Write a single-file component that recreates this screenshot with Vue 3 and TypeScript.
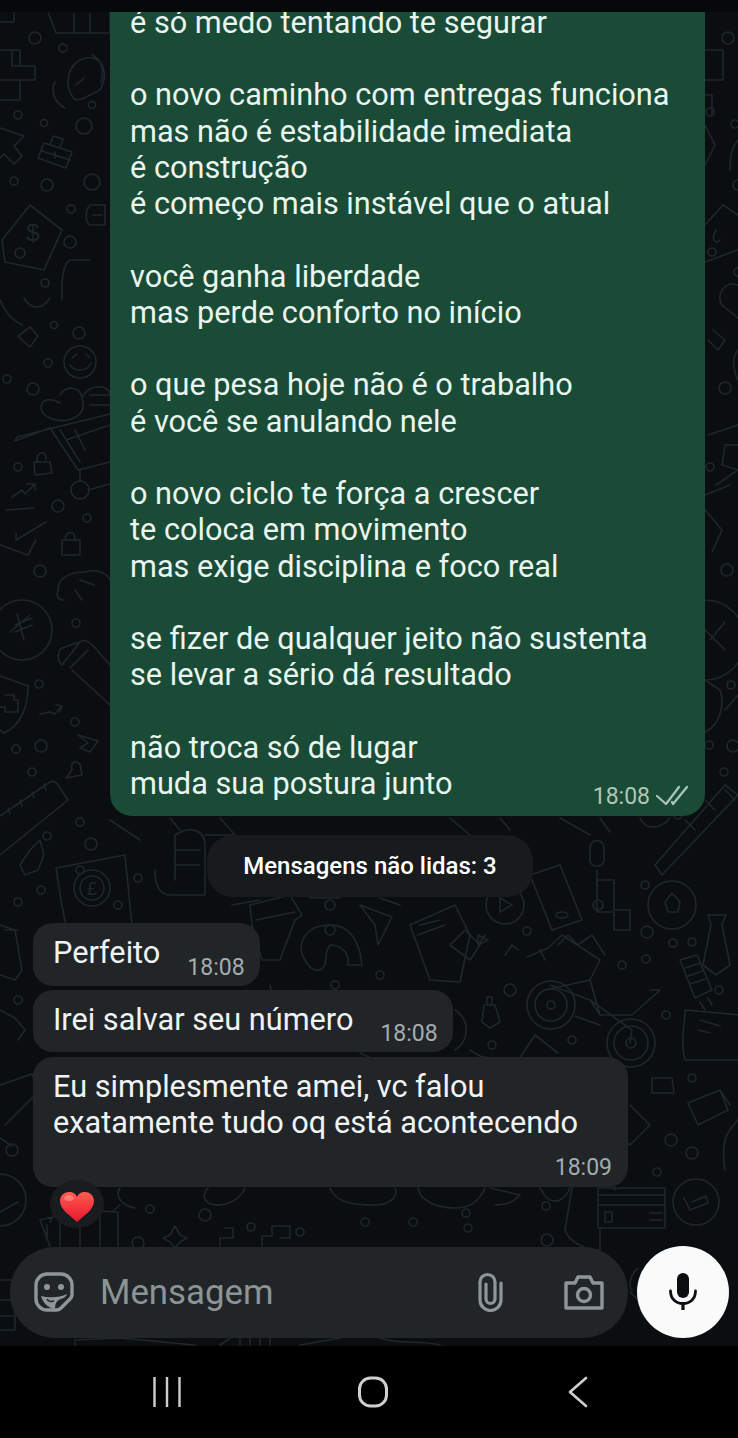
<script setup lang="ts">
const sentLines: string[] = [
  'é só medo tentando te segurar', '',
  'o novo caminho com entregas funciona', 'mas não é estabilidade imediata', 'é construção', 'é começo mais instável que o atual', '',
  'você ganha liberdade', 'mas perde conforto no início', '',
  'o que pesa hoje não é o trabalho', 'é você se anulando nele', '',
  'o novo ciclo te força a crescer', 'te coloca em movimento', 'mas exige disciplina e foco real', '',
  'se fizer de qualquer jeito não sustenta', 'se levar a sério dá resultado', '',
  'não troca só de lugar',
]
const dots: [number, number, number][] = [
  [35,38,6],[63,48,4],[18,115,4],[44,123,3.5],[84,126,8],[92,105,3.5],[14,181,4],[47,185,6],[92,182,8],[71,209,4],[70,242,6],[45,283,4],
  [54,325,3.5],[79,333,6],[48,363,4],[7,379,4],[33,389,6],[18,467,4],[58,506,6],[87,518,4],[40,571,6],
  [76,623,4],[39,684,4],[16,749,4],[41,746,6],[32,772,4],[75,722,4],[80,822,4],[47,836,4],[91,844,6],[41,890,4],[18,902,4],
  [728,38,6],[710,112,4],[735,124,4],[738,185,5],[712,252,4],[738,272,4],[725,388,6],[710,467,4],[727,570,6],[731,685,4],[709,745,4],[733,746,6],[724,772,4],
  [527,931,4],[647,932,6],[673,943,4],[692,942,4],[622,965,4],[646,959,4],[719,990,4],[666,1015,4],[572,1040,4],[492,1045,4],[510,990,6],[692,1078,4],[671,1140,6],[692,1153,6],[657,1172,4],[546,1206,4],[466,1213,4],[547,1240,6],
  [150,1209,4],[205,1215,6],[251,1227,4],[138,1243,6],[300,1232,4],[365,1222,4],[413,1222,4],[468,1228,4],
  [80,870,4],[118,905,4],[138,878,4],[330,905,5],[380,868,4],[598,905,5],[645,885,4],[678,815,4],[330,930,5],[335,985,4],[380,975,4],[18,1000,4],[12,1150,6],
]
</script>

<template>
  <div class="screen">
    <div class="topstrip"></div>
    <div class="chat">
      <svg class="wall" viewBox="0 12 738 1334" width="738" height="1334" aria-hidden="true">
        <g fill="none" stroke="#20262a" stroke-width="1.6" stroke-linecap="round" stroke-linejoin="round">
          <circle v-for="(d, i) in dots" :key="i" :cx="d[0]" :cy="d[1]" :r="d[2]" />
          <!-- top left -->
          <path d="M0 22H14V12M48 12L56 33H110V12M74 14V33M90 14V33" />
          <path d="M0 50H20V66H35V80H20V100H0M12 50V66H20M20 80H0" />
          <path d="M75 100C62 85 68 62 86 58C102 56 110 72 100 90L82 99L75 100ZM55 82C50 92 55 103 65 108M92 55C103 60 104 72 101 82M84 78L76 85" />
          <path d="M0 128L24 136L14 146L22 156L14 164L4 154L0 158" />
          <path d="M44 143L72 152L66 168L38 158ZM50 145L53 136L63 139L60 148M42 151L70 160M55 152V158" />
          <path d="M30 205L62 230L44 270L5 262L2 240Z" /><circle cx="20" cy="253" r="5" />
          <text x="33" y="241" fill="#20262a" stroke="none" font-family="Liberation Sans" font-size="24" text-anchor="middle">$</text>
          <path d="M90 260H70C60 265 62 295 62 300M90 205H105V225H90C85 222 85 210 90 205ZM93 215H102" />
          <!-- left mid -->
          <path d="M24 298C30 308 40 312 50 298M0 300C4 310 12 320 22 325" />
          <path d="M30 327L38 336L30 347L22 340L18 336Z" />
          <circle cx="80" cy="362" r="16" /><path d="M70 365C75 372 87 372 91 363M72 358L77 354M86 354L90 358" />
          <path d="M60 395C66 385 80 386 82 398C86 410 80 417 68 420C58 422 42 418 41 408C41 398 52 398 60 403" />
          <path d="M82 398C90 382 110 385 110 395M90 395H110M90 405H110" />
          <path d="M17 437L110 414M17 437L15 441L50 428L78 470L110 462M60 430L80 462M66 440L110 425M75 430L85 450M80 470V481M88 490L110 484" />
          <circle cx="80" cy="490" r="9" />
          <path d="M34 462H50L52 473L35 475ZM37 462C36 450 47 450 46 460" />
          <path d="M62 540H80L80 555H62ZM65 540C65 530 76 530 75 540" />
          <path d="M12 497L22 490L25 494L34 485M27 484L35 484L35 490" />
          <path d="M6 510L34 508M0 545L28 555L36 540M16 540L46 522M16 533L16 540" />
          <path d="M58 590C58 575 75 572 85 572C100 568 108 575 110 580M58 590C55 600 62 600 64 600M80 580L94 585M82 600L75 590" />
          <!-- yen circle -->
          <circle cx="22" cy="630" r="30" /><path d="M15 625L32 618M15 632L32 625M17 614L24 640M30 615L10 632" />
          <path d="M62 665L80 642C85 638 90 642 95 648L110 665M62 665C56 660 58 650 62 648L80 642M70 668L88 650M72 670L110 705" />
          <path d="M0 676L28 686C28 705 22 725 4 733L0 730M5 695H14V700H18V712H5V707H0" />
          <path d="M40 714L50 712L55 714L62 706M56 705L62 706L60 712" />
          <path d="M78 735L98 741L90 752L80 748L88 743Z" />
          <path d="M72 770C70 760 76 761 80 764L82 775L66 778Z" />
          <path d="M0 816L50 782C54 780 56 782 58 785L68 800L0 855M8 808L10 814M20 800L22 806M32 792L34 798M44 784L46 790" />
          <path d="M30 850L40 840L44 855L38 870L25 875L20 865Z" />
          <!-- pound card -->
          <path d="M56 868L125 855L132 925L68 935C60 900 58 880 56 868Z" /><circle cx="92" cy="888" r="18" /><circle cx="92" cy="888" r="12" />
          <text x="92" y="895" fill="#20262a" stroke="none" font-family="Liberation Sans" font-size="18" text-anchor="middle">£</text>
          <path d="M155 870C155 885 160 895 170 895H205M175 835C190 825 205 830 205 845V895M175 835V880M175 850H200M175 865H200" />
          <path d="M250 905L290 895L302 915L295 920L280 960H262L252 925ZM256 920L295 912" />
          <path d="M305 960C295 945 305 925 330 925C352 925 360 945 362 965L348 965C350 950 338 945 330 945C322 955 330 965 320 970C312 972 308 965 305 960Z" />
          <path d="M360 905L392 917L378 945L375 925Z" />
          <path d="M410 925L455 905L470 935L460 982L430 980Z M420 925L440 920M418 935L445 925" />
          <path d="M450 945L465 930L480 945L470 960Z" />
          <circle cx="505" cy="905" r="19" /><path d="M500 898L512 905L500 912Z" />
          <path d="M530 875L560 865L582 920L552 930Z" /><ellipse cx="562" cy="915" rx="6" ry="3" />
          <path d="M597 880H614V910H630V930H614V912H597ZM614 880V900" />
          <path d="M590 860V848C590 838 604 838 604 848V860C604 868 590 868 590 860ZM597 870V885" />
          <path d="M655 865L725 785L738 795L662 875Z M735 800L725 790M715 810L705 800M695 830L685 820" />
          <circle cx="672" cy="905" r="24" /><path d="M665 902L672 893L680 902L678 912H668Z" />
          <path d="M708 915H726L722 925L730 965L716 975L703 965L711 925Z" />
          <path d="M680 960L697 955L712 990L695 998Z M685 968L700 963M688 976L703 971M690 984L705 979" />
          <!-- bike -->
          <path d="M527 957L548 948L562 935L600 960L590 980L545 990M540 950L545 960M558 945L568 935L578 945L592 935L605 955" />
          <path d="M550 985L590 1000L632 1030L630 1043M590 1000L600 1015L632 1015L660 990H650M590 980L600 1015M575 1016L600 1025" />
          <circle cx="551" cy="1005" r="24" /><circle cx="551" cy="1005" r="16" /><circle cx="551" cy="1005" r="4" />
          <circle cx="631" cy="1043" r="24" /><circle cx="631" cy="1043" r="17" /><circle cx="631" cy="1043" r="5" />
          <path d="M484 1005H495L500 1022L490 1028L482 1022ZM487 1005V997H492V1005" />
          <path d="M505 955L512 945L518 950" /><path d="M478 935L488 940L478 945ZM485 935L478 945" />
          <path d="M515 1065L535 1035L558 1053" />
          <path d="M685 1010L740 1015V1060H685C680 1040 685 1025 685 1010ZM700 1020L720 1026M698 1030L710 1033M705 1010L700 1002M712 1005L708 998" />
          <path d="M652 1078H672L674 1093H652Z" />
          <path d="M688 1103L720 1090L728 1110L698 1125ZM720 1090L730 1105" />
          <path d="M738 1120C728 1130 720 1140 725 1170" />
          <path d="M630 1105L650 1125L630 1145L616 1135" />
          <!-- bottom -->
          <path d="M598 1188H665V1228H598ZM598 1195H665M598 1205H665M605 1212H612V1222H605ZM650 1213H662M650 1220H662" />
          <path d="M575 1170L565 1230C570 1245 590 1250 600 1250M600 1228V1250M615 1190C615 1175 600 1168 590 1170" />
          <circle cx="696" cy="1202" r="23" /><path d="M684 1198L690 1210L708 1203L706 1196L692 1202" />
          <circle cx="0" cy="1200" r="26" /><path d="M0 1212L18 1202" />
          <path d="M40 1220L80 1210L118 1212L118 1246M47 1240V1225M60 1220V1246M80 1215V1246M100 1215V1246M40 1220L50 1246M112 1212L120 1205M50 1222L55 1212" />
          <path d="M175 1226L180 1235L187 1238L180 1242L175 1248L170 1242L163 1238L170 1235Z" />
          <path d="M220 1246V1238H233V1228H225M262 1246V1236H272V1226H290V1238H280" />
          <path d="M330 1188C335 1200 345 1205 375 1205C392 1205 398 1195 395 1188M418 1188C420 1200 435 1208 455 1208C470 1208 480 1200 485 1188" />
          <path d="M490 1188L520 1195C515 1200 510 1205 495 1205M540 1188L545 1196C555 1206 565 1200 570 1188" />
          <path d="M245 1188C240 1200 225 1208 210 1204C200 1198 205 1192 208 1188M120 1188C115 1195 120 1205 135 1208" />
          <path d="M0 1280H15V1330H0M0 1300H15M0 1316H15" />
          <path d="M630 1292L638 1300M640 1310L650 1320M638 1268C630 1275 628 1285 632 1290" />
          <path d="M75 1345V1340L120 1338L195 1345M220 1345L230 1338M240 1338V1345M250 1338V1345M260 1338V1345M270 1338V1345M300 1345L340 1338M380 1338C400 1345 420 1340 440 1345" />
          <!-- left lower -->
          <path d="M0 925L15 930L22 970L15 980L0 975M5 930H18M0 1010L15 1018L25 1030L18 1040M0 1085L32 1074L40 1090L5 1125M0 1138L12 1146" />
          <!-- right side -->
          <path d="M705 50H723V80H705M705 95H712V115M705 125L715 145L705 165M738 140C730 150 730 160 730 170" />
          <path d="M705 225L723 205L738 215M705 262L738 250M716 230C710 240 716 245 720 240" />
          <path d="M738 285C725 280 715 295 722 305L738 318M713 330L725 340L718 350L708 340" />
          <path d="M738 350C730 360 735 375 738 380M738 445H725L722 465L738 470" />
          <path d="M708 435L738 425M716 485L738 470M705 495L730 485M705 510L722 530L712 552" />
          <path d="M705 600A38 38 0 0 1 705 680M725 622L710 640M705 630L725 650" />
          <path d="M705 680L720 690C725 705 720 725 705 732M725 710L738 695" />
          <!-- centre gaps near bubble edges -->
          <path d="M220 818L235 835H205M450 818L470 835M500 818L510 830M560 818L590 835M600 818L610 832M640 818C645 830 660 830 670 818M110 820L140 840M170 818L180 830" />
          <path d="M260 900L232 905M310 898H340M380 898L400 905M270 985L275 1010L300 1020C315 1020 320 1005 310 990M360 1053L375 1060M470 1050L480 1056L505 1062L530 1058" />
          <path d="M455 1010C470 1020 470 1040 455 1050" />
        </g>
      </svg>

      <div class="stream">
        <div class="bubble sent">
          <div v-for="(l, i) in sentLines" :key="i" class="line">{{ l }}</div>
          <div class="last">
            <span class="line">muda sua postura junto</span>
            <span class="meta">
              <span class="time">18:08</span>
              <svg class="ticks" width="32" height="22" viewBox="0 0 32 22" fill="none" stroke="#a8c4b6" stroke-width="2.3" stroke-linecap="round" stroke-linejoin="round">
                <path d="M1 11L10 19L23 2" /><path d="M16 17L17 19L31 2" />
              </svg>
            </span>
          </div>
        </div>

        <div class="unread">Mensagens não lidas: 3</div>

        <div class="bubble recv row first">
          <span class="line">Perfeito</span><span class="time">18:08</span>
        </div>
        <div class="bubble recv row second">
          <span class="line">Irei salvar seu número</span><span class="time">18:08</span>
        </div>
        <div class="bubble recv long">
          <div class="line">Eu simplesmente amei, vc falou</div>
          <div class="line">exatamente tudo oq está acontecendo</div>
          <div class="time-end"><span class="time">18:09</span></div>
        </div>
        <div class="reaction">
          <svg class="heart" width="36" height="32" viewBox="0 0 36 32">
            <defs>
              <linearGradient id="hg" x1="0" y1="0" x2="0" y2="1">
                <stop offset="0" stop-color="#ff5a52" /><stop offset="1" stop-color="#e8172a" />
              </linearGradient>
            </defs>
            <path d="M18 31C12 25 1 19 1 10C1 4 6 1 10 1C14 1 17 3 18 6C19 3 22 1 26 1C30 1 35 4 35 10C35 19 24 25 18 31Z" fill="url(#hg)" />
            <ellipse cx="10" cy="7" rx="5" ry="3" fill="#ff9a90" opacity=".6" />
          </svg>
        </div>
      </div>

      <div class="composer">
        <div class="inputbar">
          <svg class="sticker" width="40" height="40" viewBox="0 0 40 40" fill="none" stroke="#8f9699" stroke-width="3.4" stroke-linejoin="round">
            <path d="M13 2H27C33 2 38 7 38 13V23C38 25 37 26 36 27L27 36C26 37 24 38 22 38H13C7 38 2 33 2 27V13C2 7 7 2 13 2Z" />
            <circle cx="13" cy="15" r="3" fill="#8f9699" stroke="none" /><circle cx="27" cy="15" r="3" fill="#8f9699" stroke="none" />
            <path d="M7 24C15 26 25 26 33 22C32 25 30 26 27 27C23 28 21 31 21 37C14 36 9 31 7 24Z" fill="#8f9699" stroke="none" />
            <path d="M13 27C14 29 17 30 20 29" stroke="#212528" stroke-width="1.6" />
          </svg>
          <span class="placeholder">Mensagem</span>
          <svg class="clip" width="25" height="40" viewBox="0 0 25 40" fill="none" stroke="#8f9699" stroke-width="3.2" stroke-linecap="round">
            <path d="M23 11V28A10.5 10.5 0 0 1 2 28V10A7.5 7.5 0 0 1 17 10V27A4.5 4.5 0 0 1 8 27V12" />
          </svg>
          <svg class="camera" width="40" height="35" viewBox="0 0 40 35" fill="none" stroke="#8f9699" stroke-width="3.4" stroke-linejoin="round">
            <path d="M2 8H11L14 2H26L29 8H38V33H2Z" /><circle cx="20" cy="20" r="6.5" />
          </svg>
        </div>
        <div class="micbtn">
          <svg width="28" height="38" viewBox="0 0 28 38">
            <rect x="8" y="0" width="12" height="25" rx="6" fill="#0c0f11" />
            <path d="M1.5 18C1.5 26 7 30.5 14 30.5C21 30.5 26.5 26 26.5 18" fill="none" stroke="#0c0f11" stroke-width="2.8" stroke-linecap="round" />
            <rect x="12.4" y="30" width="3.2" height="7" fill="#0c0f11" />
          </svg>
        </div>
      </div>
    </div>

    <div class="navbar">
      <svg width="28" height="30" viewBox="0 0 28 30" fill="none" stroke="#cfcfcf" stroke-width="2.4"><path d="M1.5 0V30M14 0V30M26.5 0V30" /></svg>
      <svg width="30" height="32" viewBox="0 0 30 32" fill="none" stroke="#cfcfcf" stroke-width="3"><rect x="1.5" y="2" width="27" height="28" rx="11" /></svg>
      <svg class="back" width="22" height="32" viewBox="0 0 22 32" fill="none" stroke="#cfcfcf" stroke-width="2.6" stroke-linecap="round" stroke-linejoin="round"><path d="M19 2L3 16L19 30" /></svg>
    </div>
  </div>
</template>

<style>
html, body { margin: 0; background: #000; }
</style>

<style scoped>
.screen {
  width: 738px;
  height: 1438px;
  display: flex;
  flex-direction: column;
  overflow: hidden;
  font-family: Roboto, "Liberation Sans", sans-serif;
  background: #000;
}
.topstrip { height: 12px; background: #06090b; flex: none; }
.chat {
  position: relative;
  height: 1334px;
  flex: none;
  display: flex;
  flex-direction: column;
  overflow: hidden;
  background: #0a0e11;
}
.wall { position: absolute; left: 0; top: 0; }
.stream {
  position: relative;
  flex: 1;
  display: flex;
  flex-direction: column;
  align-items: flex-start;
}
.bubble { box-sizing: border-box; color: #e9f5ee; }
.line { display: block; font-size: 30.7px; line-height: 36.24px; min-height: 36.24px; white-space: nowrap; }
.sent {
  margin: -7px 0 0 110px;
  width: 595px;
  padding: 0 17px 0 20px;
  background: #194b37;
  border-radius: 0 0 22px 22px;
}
.last { display: flex; justify-content: space-between; align-items: flex-start; height: 50px; }
.meta { display: flex; align-items: center; margin-top: 17px; gap: 6px; height: 28px; }
.time { font-size: 23px; line-height: 28px; color: #a4acaf; white-space: nowrap; }
.sent .time { color: #b0c6bb; }
.ticks { margin-top: -2px; }
.unread {
  align-self: flex-start;
  margin: 19px 0 0 207px;
  width: 326px;
  height: 62px;
  border-radius: 26px;
  background: #171b1e;
  color: #fff;
  font-size: 24px;
  font-weight: 500;
  display: flex;
  align-items: center;
  justify-content: center;
}
.recv {
  margin-left: 33px;
  background: #212528;
  border-radius: 20px;
  color: #f1f3f3;
  padding: 12px 15px 4px 20px;
}
.row { display: flex; align-items: flex-start; gap: 27px; height: 63px; }
.row .time { align-self: flex-end; }
.first { margin-top: 26px; }
.second { margin-top: 4px; height: 62px; }
.long { margin-top: 5px; width: 595px; height: 130px; padding-right: 16px; }
.time-end { display: flex; justify-content: flex-end; margin-top: 13px; }
.reaction {
  width: 54px;
  height: 48px;
  margin: -7px 0 0 50px;
  border-radius: 50%;
  background: #181c1f;
  display: flex;
  align-items: center;
  justify-content: center;
  position: relative;
}
.heart { margin-top: 6px; }
.composer {
  position: relative;
  flex: none;
  display: flex;
  align-items: center;
  gap: 9px;
  padding: 0 9px 8px 10px;
}
.inputbar {
  box-sizing: border-box;
  width: 618px;
  height: 91px;
  border-radius: 45px;
  background: #212528;
  display: flex;
  align-items: center;
  padding: 0 24px;
}
.sticker { flex: none; }
.placeholder { margin-left: 26px; font-size: 34.8px; color: #8c9496; flex: 1; }
.camera { margin-left: 61px; }
.micbtn {
  width: 92px;
  height: 92px;
  border-radius: 50%;
  background: #fafafa;
  display: flex;
  align-items: center;
  justify-content: center;
  flex: none;
}
.navbar {
  flex: 1;
  background: #000;
  display: grid;
  grid-template-columns: 28px 30px 22px;
  justify-content: start;
  align-items: center;
  padding: 0 0 0 153px;
  column-gap: 177px;
}
.back { margin-left: 2px; }
</style>
